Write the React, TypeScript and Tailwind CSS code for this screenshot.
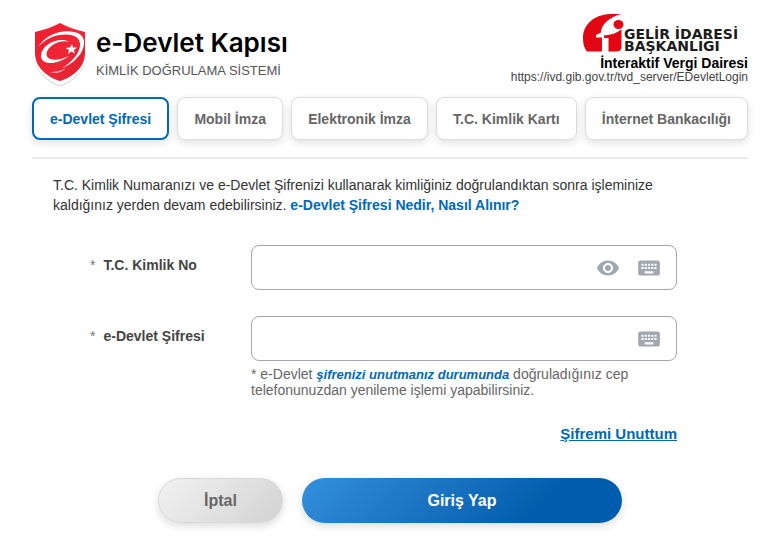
import clsx from "clsx";
import { MdKeyboard, MdVisibility } from "react-icons/md";

const tabs = [
  "e-Devlet Şifresi",
  "Mobil İmza",
  "Elektronik İmza",
  "T.C. Kimlik Kartı",
  "İnternet Bankacılığı",
];

function ShieldLogo() {
  return (
    <svg viewBox="0 0 56 66" className="h-[66px] w-[56px]" aria-hidden="true">
      <defs>
        <linearGradient id="shield" x1="0" y1="0" x2="1" y2="1">
          <stop offset="0" stopColor="#ee1c2e" />
          <stop offset="0.6" stopColor="#ee2737" />
          <stop offset="1" stopColor="#d91e30" />
        </linearGradient>
      </defs>
      <path
        d="M28 3C21 7 12 9 2 11V34C2 49 14 60 28 65C42 60 54 49 54 34V11C44 9 35 7 28 3Z"
        fill="#e4e4e4"
      />
      <path
        d="M28 1C21 5 12 8 2 9V33C2 47 14 58 28 63C42 58 54 47 54 33V9C44 8 35 5 28 1Z"
        fill="#fff"
      />
      <path
        d="M28 1C21 5 12 8 3 10V31C3 45 15 55 28 59C41 55 53 45 53 31V10C44 8 35 5 28 1Z"
        fill="url(#shield)"
      />
      <path
        d="M6 25C14 12 30 7 42 10C53 12 54 21 50 29C46 37 38 43 30 46C40 40 47 32 48 24C49 16 42 12.500 34 12.500C23 12.500 13 17 6 25Z"
        fill="#fff"
      />
      <path
        d="M38 20C27 14 10 22 9 33C8 43 24 44 37 34C27 39 14.500 39.500 14.500 32C15 24 28 17 38 20Z"
        fill="#fff"
      />
      <path
        d="M40 22L41 25.500L45 25.500L41.800 28L43 31.500L39.500 29.500L36 32L37 28L33.500 26L38 25.500Z"
        fill="#fff"
      />
      <path d="M18 50C25 52 30 50 34 46C29 49 25 50 18 50Z" fill="#fff" opacity="0.8" />
    </svg>
  );
}

function GibLogo() {
  return (
    <svg viewBox="0 0 41 38" className="h-[38px] w-[41px]" aria-hidden="true">
      <path
        d="M38 0H27C10 1 0 11 0 24C0 30 1 34 4 37.500H19V23.500H13V21L18 18.500C18 10 27 3 38 0Z"
        fill="#e30613"
      />
      <ellipse cx="35.500" cy="10.500" rx="5" ry="4.500" fill="#e30613" />
      <path d="M21 21.500C28 21 34 19 38.500 15.500V33C38.500 36 36.500 37.500 33 37.500H25.500V24H21Z" fill="#e30613" />
    </svg>
  );
}

export default function App() {
  return (
    <main className="bg-white pt-3 pr-[22px] pb-6 pl-8 font-['Liberation_Sans',sans-serif] text-[#333]">
      <header className="flex items-start justify-between">
        <div className="flex items-center gap-2 pt-2.5">
          <ShieldLogo />
          <div>
            <h1 className="font-['Inter',sans-serif] text-[26px] leading-7 font-semibold text-black">
              e-Devlet Kapısı
            </h1>
            <p className="mt-1 text-[13px] leading-5 text-[#555]">
              KİMLİK DOĞRULAMA SİSTEMİ
            </p>
          </div>
        </div>
        <div className="text-right">
          <div className="flex h-10 items-end justify-end pt-0.5">
            <GibLogo />
            <div className="w-[124px] text-left font-['DejaVu_Sans',sans-serif] text-sm leading-3 font-bold whitespace-nowrap text-[#1c1c1c]">
              <p>GELİR İDARESİ</p>
              <p>BAŞKANLIĞI</p>
            </div>
          </div>
          <p className="mt-[3px] text-sm leading-4 font-bold text-black">
            İnteraktif Vergi Dairesi
          </p>
          <p className="text-xs leading-3 text-[#444]">
            https://ivd.gib.gov.tr/tvd_server/EDevletLogin
          </p>
        </div>
      </header>

      <nav className="mt-[9px] flex justify-between border-b-2 border-[#eaeaea] pb-[17px]">
        {tabs.map((tab, i) => (
          <button
            key={tab}
            type="button"
            className={clsx(
              "h-[43px] rounded-lg bg-white px-4 text-sm font-bold whitespace-nowrap shadow-[0_3px_8px_rgba(0,0,0,0.12)]",
              i === 0
                ? "border-2 border-[#0069b9] text-[#0069b9]"
                : "border border-[#dcdcdc] text-[#666]",
            )}
          >
            {tab}
          </button>
        ))}
      </nav>

      <p className="mt-4 pr-[60px] pl-[21px] text-sm leading-5">
        T.C. Kimlik Numaranızı ve e-Devlet Şifrenizi kullanarak kimliğiniz
        doğrulandıktan sonra işleminize kaldığınız yerden devam edebilirsiniz.{" "}
        <a href="#nedir" className="font-bold text-[#0069b9]">
          e-Devlet Şifresi Nedir, Nasıl Alınır?
        </a>
      </p>

      <form className="mt-[30px]" onSubmit={(e) => e.preventDefault()}>
        <div className="pr-[71px] pl-[58px]">
          <div className="flex">
            <label
              htmlFor="tckn"
              className="w-[161px] shrink-0 pt-2.5 text-sm leading-5 font-bold text-[#444]"
            >
              <span className="mr-2 font-normal text-[#777]">*</span>
              T.C. Kimlik No
            </label>
            <div className="flex h-[45px] flex-1 items-center rounded-lg border border-[#a3a5b2] pr-3.5">
              <input id="tckn" type="text" className="h-full min-w-0 flex-1 px-3 outline-none" />
              <button type="button" aria-label="Göster" className="mr-4 text-[#a0a7af]">
                <MdVisibility size={24} />
              </button>
              <button type="button" aria-label="Sanal klavye" className="text-[#a0a7af]">
                <MdKeyboard size={26} />
              </button>
            </div>
          </div>

          <div className="mt-[26px] flex">
            <label
              htmlFor="sifre"
              className="w-[161px] shrink-0 pt-2.5 text-sm leading-5 font-bold text-[#444]"
            >
              <span className="mr-2 font-normal text-[#777]">*</span>
              e-Devlet Şifresi
            </label>
            <div className="flex-1">
              <div className="flex h-[45px] items-center rounded-lg border border-[#a3a5b2] pr-3.5">
                <input id="sifre" type="password" className="h-full min-w-0 flex-1 px-3 outline-none" />
                <button type="button" aria-label="Sanal klavye" className="text-[#a0a7af]">
                  <MdKeyboard size={26} />
                </button>
              </div>
              <p className="mt-[5px] pr-8 text-sm leading-4 text-[#666]">
                * e-Devlet{" "}
                <strong className="text-[13px] leading-3 text-[#0069b9] italic">
                  şifrenizi unutmanız durumunda
                </strong>{" "}
                doğruladığınız cep telefonunuzdan yenileme işlemi yapabilirsiniz.
              </p>
            </div>
          </div>

          <div className="mt-6 text-right">
            <a href="#unuttum" className="text-[15px] leading-5 font-bold text-[#0069b9] underline">
              Şifremi Unuttum
            </a>
          </div>
        </div>

        <div className="mt-[32px] flex gap-[19px] pr-[126px] pl-[126px]">
          <button
            type="button"
            className="h-[45px] w-[125px] rounded-full border border-[#d8d8d8] bg-linear-135 from-[#f2f2f2] to-[#d2d2d2] text-base font-bold text-[#666] shadow-[0_3px_8px_rgba(0,0,0,0.14)]"
          >
            İptal
          </button>
          <button
            type="submit"
            className="h-[45px] flex-1 rounded-full bg-linear-135 from-[#338fdc] to-[#005cac] to-75% text-base font-bold text-white shadow-[0_3px_8px_rgba(0,0,0,0.14)]"
          >
            Giriş Yap
          </button>
        </div>
      </form>
    </main>
  );
}
